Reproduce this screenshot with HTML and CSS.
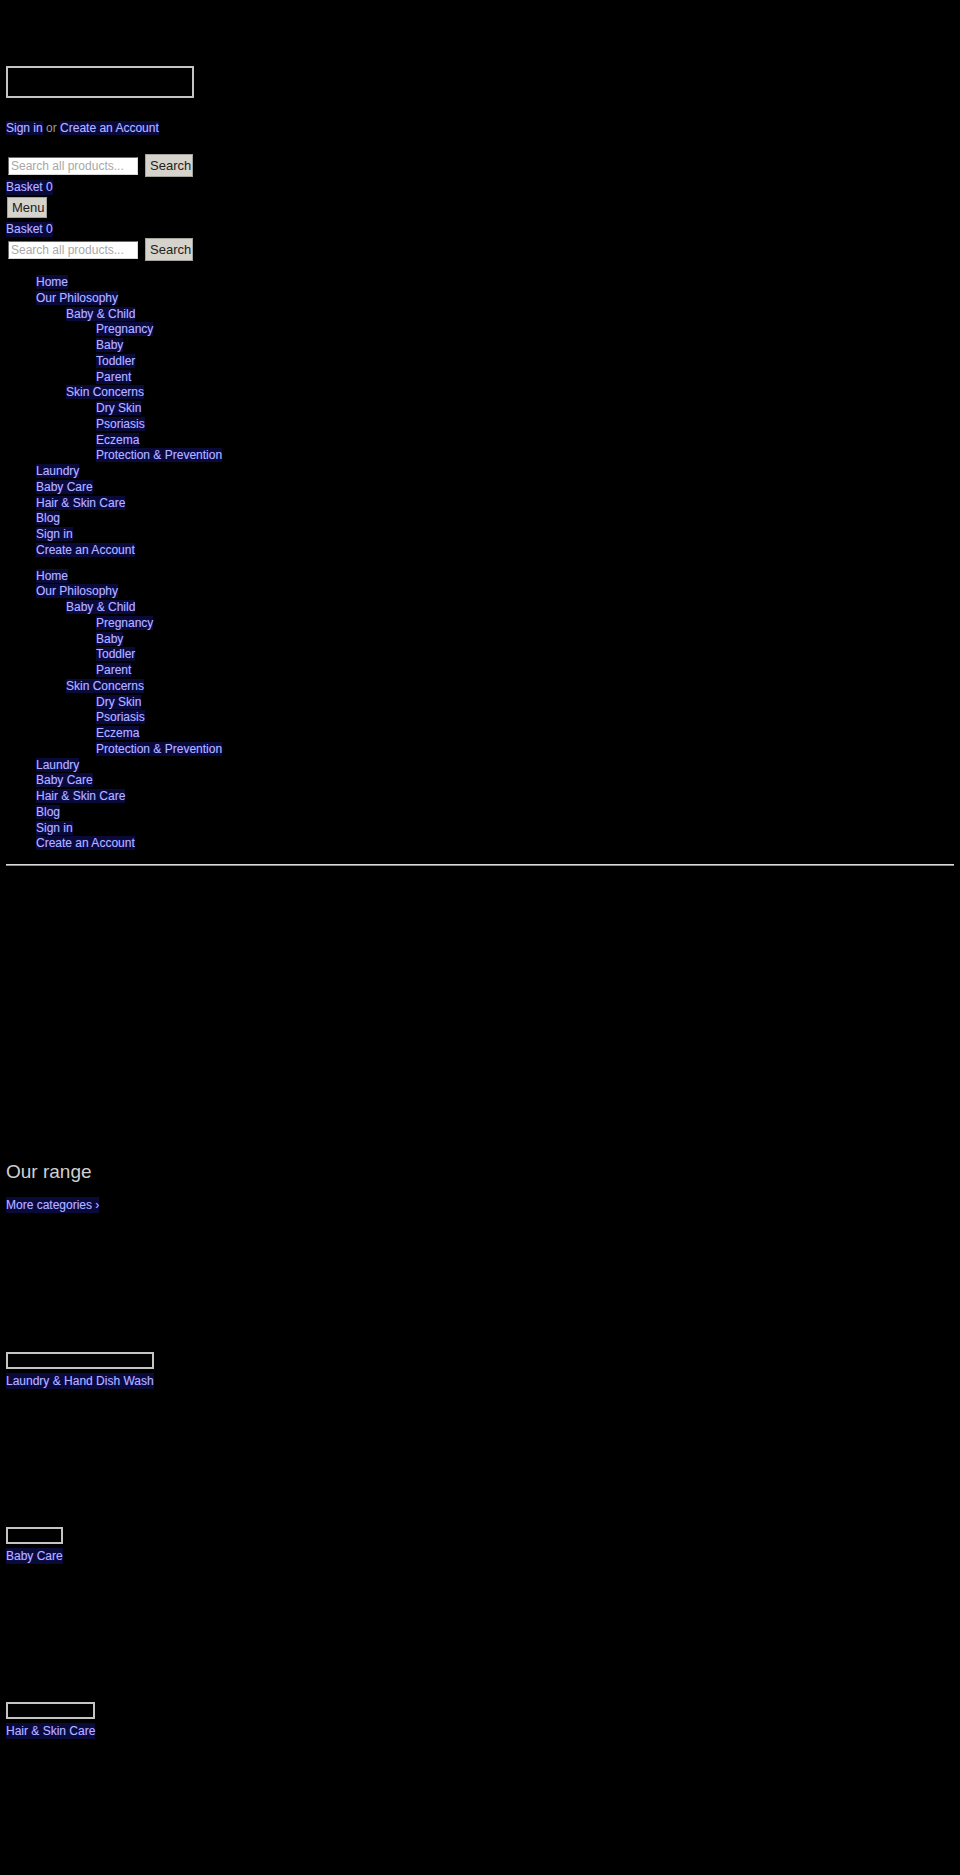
FILE: index.html
```html
<!DOCTYPE html>
<html>
<head>
  <meta charset="utf-8">
  <title>Our range</title>
  <link rel="stylesheet" href="styles.css">
</head>
<body>
  <header class="site-header">
    <a class="logo" href="#"></a>
    <p class="account"><a href="#">Sign in</a> <span class="or">or</span> <a href="#">Create an Account</a></p>
    <form class="search">
      <input type="text" placeholder="Search all products...">
      <button type="button">Search</button>
    </form>
    <a class="basket" href="#">Basket 0</a>
    <button class="menu-btn" type="button">Menu</button>
    <a class="basket basket-mobile" href="#">Basket 0</a>
    <form class="search search-mobile">
      <input type="text" placeholder="Search all products...">
      <button type="button">Search</button>
    </form>

    <nav class="main-nav">
      <ul class="nav">
        <li><a href="#">Home</a></li>
        <li><a href="#">Our Philosophy</a>
          <ul>
            <li><a href="#">Baby &amp; Child</a>
              <ul>
                <li><a href="#">Pregnancy</a></li>
                <li><a href="#">Baby</a></li>
                <li><a href="#">Toddler</a></li>
                <li><a href="#">Parent</a></li>
              </ul>
            </li>
            <li><a href="#">Skin Concerns</a>
              <ul>
                <li><a href="#">Dry Skin</a></li>
                <li><a href="#">Psoriasis</a></li>
                <li><a href="#">Eczema</a></li>
                <li><a href="#">Protection &amp; Prevention</a></li>
              </ul>
            </li>
          </ul>
        </li>
        <li><a href="#">Laundry</a></li>
        <li><a href="#">Baby Care</a></li>
        <li><a href="#">Hair &amp; Skin Care</a></li>
        <li><a href="#">Blog</a></li>
        <li><a href="#">Sign in</a></li>
        <li><a href="#">Create an Account</a></li>
      </ul>
    </nav>

    <nav class="mobile-nav">
      <ul class="nav">
        <li><a href="#">Home</a></li>
        <li><a href="#">Our Philosophy</a>
          <ul>
            <li><a href="#">Baby &amp; Child</a>
              <ul>
                <li><a href="#">Pregnancy</a></li>
                <li><a href="#">Baby</a></li>
                <li><a href="#">Toddler</a></li>
                <li><a href="#">Parent</a></li>
              </ul>
            </li>
            <li><a href="#">Skin Concerns</a>
              <ul>
                <li><a href="#">Dry Skin</a></li>
                <li><a href="#">Psoriasis</a></li>
                <li><a href="#">Eczema</a></li>
                <li><a href="#">Protection &amp; Prevention</a></li>
              </ul>
            </li>
          </ul>
        </li>
        <li><a href="#">Laundry</a></li>
        <li><a href="#">Baby Care</a></li>
        <li><a href="#">Hair &amp; Skin Care</a></li>
        <li><a href="#">Blog</a></li>
        <li><a href="#">Sign in</a></li>
        <li><a href="#">Create an Account</a></li>
      </ul>
    </nav>
  </header>

  <hr class="rule">

  <section class="hero"></section>

  <section class="range">
    <h2>Our range</h2>
    <a class="more" href="#">More categories &rsaquo;</a>

    <div class="cats">
      <a class="cat" href="#">
        <span class="cat-img"></span>
        <span class="cat-name">Laundry &amp; Hand Dish Wash</span>
      </a>
      <a class="cat" href="#">
        <span class="cat-img"></span>
        <span class="cat-name">Baby Care</span>
      </a>
      <a class="cat" href="#">
        <span class="cat-img"></span>
        <span class="cat-name">Hair &amp; Skin Care</span>
      </a>
    </div>
  </section>
</body>
</html>
```

FILE: styles.css
```css
html {
  background: #000;
}
body {
  margin: 0 6px;
  min-height: 1875px;
  background: #000;
  color: #cfcfcf;
  font-family: "Liberation Sans", Arial, sans-serif;
  font-size: 12px;
  line-height: 15px;
}
a {
  color: #b4b4f4;
  text-decoration: none;
  background: #0a0a38;
  text-shadow: 0 0 1px #3232e0;
}

/* header */
.site-header {
  padding-top: 66px;
}
.logo {
  display: block;
  width: 184px;
  height: 28px;
  border: 2px solid #c4c4c4;
  background: none;
}
.account {
  margin: 23px 0 0;
}
.account .or {
  color: #9a9a9a;
}
.search {
  display: flex;
  align-items: center;
  gap: 7px;
  margin: 18px 0 0 2px;
  height: 23px;
}
.search input {
  box-sizing: border-box;
  width: 130px;
  height: 18px;
  margin: 0;
  padding: 0 2px;
  border: 1px solid;
  border-color: #6a6a6a #d8d8d8 #d8d8d8 #6a6a6a;
  background: #fff;
  font-family: "Liberation Sans", Arial, sans-serif;
  font-size: 12px;
}
.search input::placeholder {
  color: #a8a8a8;
}
.search button,
.menu-btn {
  box-sizing: border-box;
  height: 23px;
  margin: 0;
  padding: 0 4px;
  border: 1px solid #a6a39c;
  background: #d6d3cc;
  color: #222;
  font-family: "Liberation Sans", Arial, sans-serif;
  font-size: 13px;
}
.search button {
  width: 48px;
}
.basket {
  display: inline-block;
  margin-top: 3px;
}
.menu-btn {
  display: block;
  width: 40px;
  height: 21px;
  margin: 2px 0 0 1px;
}
.basket-mobile {
  margin-top: 4px;
}
.search-mobile {
  margin-top: 1px;
}

/* navigation */
.nav,
.nav ul {
  list-style: none;
  margin: 0;
  padding-left: 30px;
}
.nav {
  font-size: 12px;
  line-height: 15.75px;
}
.main-nav {
  margin-top: 14px;
}
.mobile-nav {
  margin-top: 10px;
}

.rule {
  height: 0;
  margin: 12px 0 0;
  border: 0;
  border-top: 1px solid #d8d8d8;
  border-bottom: 1px solid #8c8c8c;
}

.hero {
  height: 295px;
}

/* categories */
.range h2 {
  margin: 0;
  font-size: 19px;
  line-height: 22px;
  font-weight: normal;
  color: #d0d0d0;
}
.more {
  display: inline-block;
  margin-top: 14px;
  line-height: 16px;
}
.cats {
  display: flex;
  flex-direction: column;
  align-items: flex-start;
}
.cat {
  display: flex;
  flex-direction: column;
  margin-top: 139px;
  background: none;
}
.cat + .cat {
  margin-top: 138px;
}
.cat-img {
  display: block;
  height: 13px;
  border: 2px solid #c4c4c4;
}
.cat-name {
  margin-top: 4px;
  line-height: 16px;
  background: #0a0a38;
}
```
